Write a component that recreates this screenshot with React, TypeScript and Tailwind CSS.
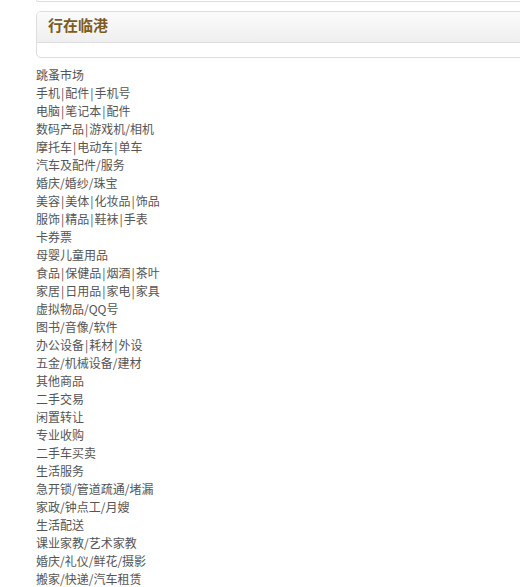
import React from "react";

const items = [
  "跳蚤市场",
  "手机|配件|手机号",
  "电脑|笔记本|配件",
  "数码产品|游戏机/相机",
  "摩托车|电动车|单车",
  "汽车及配件/服务",
  "婚庆/婚纱/珠宝",
  "美容|美体|化妆品|饰品",
  "服饰|精品|鞋袜|手表",
  "卡券票",
  "母婴儿童用品",
  "食品|保健品|烟酒|茶叶",
  "家居|日用品|家电|家具",
  "虚拟物品/QQ号",
  "图书/音像/软件",
  "办公设备|耗材|外设",
  "五金/机械设备/建材",
  "其他商品",
  "二手交易",
  "闲置转让",
  "专业收购",
  "二手车买卖",
  "生活服务",
  "急开锁/管道疏通/堵漏",
  "家政/钟点工/月嫂",
  "生活配送",
  "课业家教/艺术家教",
  "婚庆/礼仪/鲜花/摄影",
  "搬家/快递/汽车租赁",
];

function Line({ text }: { text: string }) {
  const parts = text.split(/(\|)/);
  return (
    <li className="whitespace-nowrap">
      {parts.map((p, i) =>
        p === "|" ? (
          <span key={i} className="mx-[1px]">
            |
          </span>
        ) : (
          <span key={i}>{p}</span>
        )
      )}
    </li>
  );
}

export default function App() {
  return (
    <div
      className="w-[520px] h-[587px] overflow-hidden bg-white"
      style={{ fontFamily: '"Noto Sans CJK SC", "Noto Sans", sans-serif' }}
    >
      <div className="ml-[36px] w-[520px] h-[2px] border-b border-l border-[#dddddd] rounded-bl-[4px]" />
      <div className="ml-[36px] mt-[9px] w-[520px] border border-[#dddddd] rounded-[5px] overflow-hidden">
        <div className="h-[31px] border-b border-[#dddddd] bg-gradient-to-b from-[#fbfbfb] to-[#efefef] pl-[11px] text-[15px] font-bold leading-[26px] text-[#7d5b1f]">
          行在临港
        </div>
        <div className="h-[14px]" />
      </div>
      <ul className="ml-[36px] mt-[8px] text-[12px] leading-[18px] text-[#555555]">
        {items.map((t) => (
          <Line key={t} text={t} />
        ))}
      </ul>
    </div>
  );
}
